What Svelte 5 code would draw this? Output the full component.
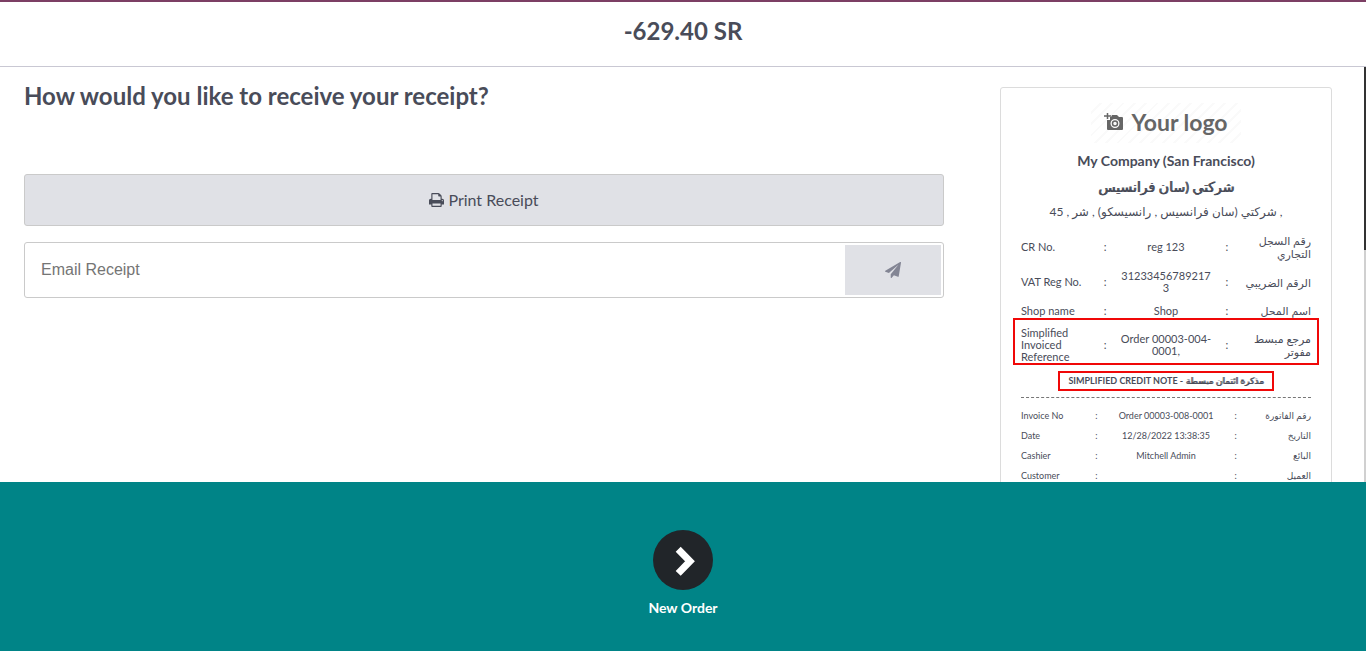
<script>
  const company = [
    { en: 'CR No.', value: 'reg 123', ar: 'رقم السجل التجاري' },
    { en: 'VAT Reg No.', value: '312334567892173', ar: 'الرقم الضريبي' },
    { en: 'Shop name', value: 'Shop', ar: 'اسم المحل' },
    { en: 'Simplified Invoiced Reference', value: 'Order 00003-004-0001,', ar: 'مرجع مبسط مفوتر', marked: true },
  ];
  const order = [
    { en: 'Invoice No', value: 'Order 00003-008-0001', ar: 'رقم الفاتورة' },
    { en: 'Date', value: '12/28/2022 13:38:35', ar: 'التاريخ' },
    { en: 'Cashier', value: 'Mitchell Admin', ar: 'البائع' },
    { en: 'Customer', value: '', ar: 'العميل' },
  ];
  let email = $state('');
</script>

<div class="screen">
  <header><h1>-629.40 SR</h1></header>

  <main>
    <section class="actions">
      <h2>How would you like to receive your receipt?</h2>
      <button class="print" type="button">
        <svg viewBox="0 0 1664 1536" width="15" height="14" aria-hidden="true">
          <path fill="currentColor" fill-rule="evenodd" d="M384 1408h896v-256H384v256zm0-640h896V384h-160q-40 0-68-28t-28-68V128H384v640zm1152 64q0-26-19-45t-45-19-45 19-19 45 19 45 45 19 45-19 19-45zm128 0v416q0 13-9.500 22.500t-22.500 9.500h-224v160q0 40-28 68t-68 28H352q-40 0-68-28t-28-68v-160H32q-13 0-22.500-9.500T0 1248V832q0-79 56.500-135.500T192 640h64V96q0-40 28-68t68-28h672q40 0 88 20t76 48l152 152q28 28 48 76t20 88v256h64q79 0 135.500 56.500T1664 832z" />
        </svg>
        Print Receipt
      </button>
      <form class="email" onsubmit={(e) => e.preventDefault()}>
        <input type="email" placeholder="Email Receipt" aria-label="Email Receipt" bind:value={email} />
        <button type="submit" aria-label="Send">
          <svg viewBox="0 0 1792 1792" width="16" height="16" aria-hidden="true">
            <path fill="currentColor" d="M1764 11q33 24 27 64l-256 1536q-5 29-32 45-14 8-31 8-11 0-24-5l-453-185-242 295q-18 23-49 23-13 0-22-4-19-7-30.500-23.500T640 1728v-349l864-1059-1069 925-395-162q-37-14-40-55-2-40 32-59L1696 9q15-9 32-9 20 0 36 11z" />
          </svg>
        </button>
      </form>
    </section>

    <article class="receipt">
      <div class="logo">
        <svg viewBox="0 0 20 20" width="20" height="20" aria-hidden="true">
          <path d="M3.500 1v6M0 4h7" stroke="#666" stroke-width="1.500" />
          <path fill="#666" fill-rule="evenodd" d="M8 3h5l2 2h3q1 0 1 1v11q0 1-1 1H4q-1 0-1-1V8h3V5h1zM11 7a4.500 4.500 0 1 0 0 9a4.500 4.500 0 1 0 0-9z" />
          <circle cx="11" cy="11.500" r="2.500" fill="none" stroke="#666" stroke-width="1.500" />
        </svg>
        <span>Your logo</span>
      </div>
      <p class="name">My Company (San Francisco)</p>
      <p class="name arabic" dir="rtl">شركتي (سان فرانسيس</p>
      <p class="address" dir="rtl">, شركتي (سان فرانسيس , رانسيسكو) , شر , 45</p>

      <table class="company">
        <tbody>
          {#each company as row}
            <tr class:marked={row.marked}>
              <td class="en">{row.en}</td>
              <td class="sep">:</td>
              <td class="value">{row.value}</td>
              <td class="sep">:</td>
              <td class="ar" dir="rtl">{row.ar}</td>
            </tr>
          {/each}
        </tbody>
      </table>

      <p class="title"><strong>SIMPLIFIED CREDIT NOTE - <span class="arabic">مذكرة ائتمان مبسطة</span></strong></p>
      <hr />

      <table class="order">
        <tbody>
          {#each order as row}
            <tr>
              <td class="en">{row.en}</td>
              <td class="sep">:</td>
              <td class="value">{row.value}</td>
              <td class="sep">:</td>
              <td class="ar" dir="rtl">{row.ar}</td>
            </tr>
          {/each}
        </tbody>
      </table>
    </article>
    <div class="scroll" aria-hidden="true"><div class="thumb"></div></div>
  </main>

  <footer>
    <button type="button" class="next">
      <span class="disc">
        <svg viewBox="0 0 60 60" width="60" height="60" aria-hidden="true">
          <path d="M25.200 19.200L37 31.300L25.200 43.400" fill="none" stroke="#fff" stroke-width="7" />
        </svg>
      </span>
      New Order
    </button>
  </footer>
</div>

<style>
  :global(body) { margin: 0; }
  .screen {
    box-sizing: border-box;
    display: flex;
    flex-direction: column;
    height: 100vh;
    border-top: 2px solid #7c3f64;
    background: #fff;
    color: #494c59;
    font-family: Lato, 'DejaVu Sans', sans-serif;
  }
  h1, h2, p { margin: 0; }
  button { font-family: inherit; color: inherit; cursor: pointer; }
  header {
    padding: 14px 0 20px;
    border-bottom: 1px solid #c9c8d3;
    text-align: center;
  }
  h1, h2 { font-size: 24px; line-height: 30px; font-weight: 700; }
  main {
    position: relative;
    flex: 1;
    min-height: 0;
    overflow: hidden;
    display: grid;
    grid-template-columns: 1fr 332px;
    align-items: start;
    column-gap: 56px;
    padding: 0 34px 0 24px;
  }
  .actions { display: flex; flex-direction: column; padding-top: 14px; }
  .print {
    display: flex;
    align-items: center;
    justify-content: center;
    gap: 4px;
    height: 52px;
    margin: 63px 0 16px;
    padding: 0 0 1px;
    border: 1px solid #cacaca;
    border-radius: 3px;
    background: #e0e1e6;
    font-size: 16px;
  }
  .email {
    display: flex;
    box-sizing: border-box;
    height: 56px;
    padding: 2px;
    border: 1px solid #cacaca;
    border-radius: 3px;
  }
  .email input {
    flex: 1;
    min-width: 0;
    border: 0;
    padding: 0 14px;
    outline: 0;
    color: inherit;
    font: 16px 'Liberation Sans', Arial, sans-serif;
  }
  .email button {
    display: grid;
    place-items: center;
    width: 96px;
    padding: 0;
    border: 0;
    background: #e0e1e6;
    color: #838594;
  }
  .receipt {
    margin-top: 20px;
    padding: 15px 20px 20px;
    border: 1px solid #dcdcdc;
    border-radius: 3px;
    text-align: center;
  }
  .logo {
    display: flex;
    align-items: center;
    justify-content: center;
    gap: 7px;
    box-sizing: border-box;
    width: 150px;
    height: 40px;
    margin: 0 auto 8px;
    padding-bottom: 2px;
    background: repeating-linear-gradient(135deg, #fff 0 6px, #fafafa 6px 8px);
    color: #666;
    font-size: 23px;
    font-weight: 700;
  }
  .name { font-size: 14px; line-height: 20px; font-weight: 700; margin-bottom: 6px; }
  .arabic { font-weight: 400; text-shadow: 1px 0 currentColor; }
  .address { font-size: 12px; line-height: 18px; margin-bottom: 8px; }
  table { width: 100%; table-layout: fixed; border-collapse: collapse; }
  td { padding: 0; vertical-align: middle; }
  .en { text-align: left; }
  .ar { text-align: right; direction: ltr; }
  .company { font-size: 11px; line-height: 12px; }
  .company td { padding: 5px 0; }
  .company .en, .company .ar { width: 25%; }
  .company .sep { width: 8%; }
  .company .value { padding: 5px 3px; overflow-wrap: anywhere; }
  .company .ar { line-height: 13px; }
  .marked { position: relative; }
  .marked .en::after {
    content: '';
    position: absolute;
    inset: -4px -8px 3px;
    border: 2px solid #f00808;
  }
  .title { margin-top: 3px; font-size: 9px; line-height: 16px; }
  .title strong {
    display: inline-block;
    padding: 0 8px;
    border: 2px solid #f00808;
  }
  hr { margin: 6px 0 8px; border: 0; border-top: 1px dashed #777; }
  .order { font-size: 9px; line-height: 12px; }
  .order td { height: 20px; }
  .order .en, .order .ar { width: 22%; }
  .order .sep { width: 8%; }
  .scroll {
    position: absolute;
    top: 0;
    right: 0;
    bottom: 0;
    width: 2px;
    background: #d0d0d0;
  }
  .thumb { height: 44%; background: #333; }
  footer {
    box-sizing: border-box;
    padding: 48px 0 33px;
    background: #008487;
    text-align: center;
  }
  .next {
    display: inline-flex;
    flex-direction: column;
    align-items: center;
    gap: 8px;
    padding: 0;
    border: 0;
    background: none;
    color: #fff;
    font-size: 14px;
    line-height: 20px;
    font-weight: 700;
  }
  .disc { height: 60px; border-radius: 50%; background: #212529; }
  .disc svg { display: block; }
</style>
